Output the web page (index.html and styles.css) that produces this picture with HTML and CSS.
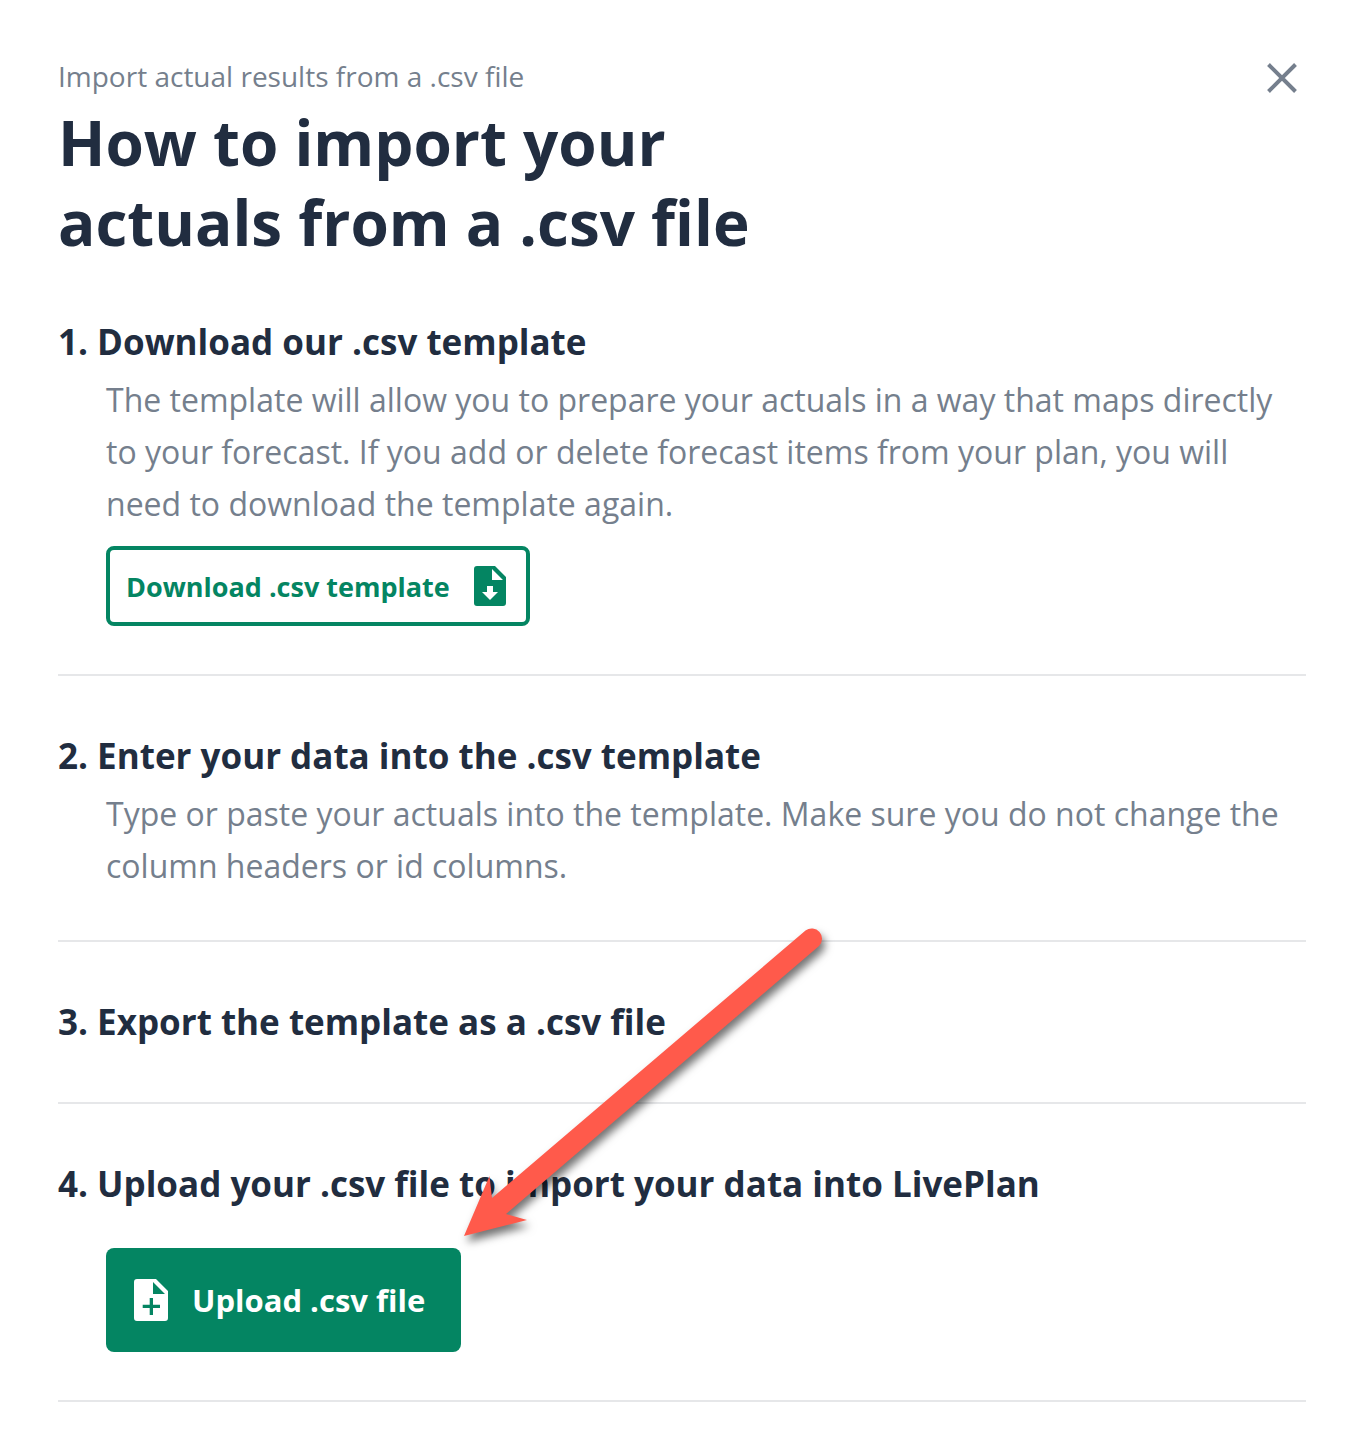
FILE: index.html
```
<!DOCTYPE html>
<html lang="en">

<head>
    <meta charset="UTF-8">
    <meta name="viewport" content="width=device-width, initial-scale=1.0">
    <title>Import actual results</title>
    <link rel="stylesheet" href="styles.css">
</head>

<body>
    <main class="modal">
        <header class="header">
            <div class="header-text">
                <p class="eyebrow">Import actual results from a .csv file</p>
                <h1 class="title">How to import your actuals from a .csv file</h1>
            </div>
            <button class="close" type="button" aria-label="Close">
                <svg width="30" height="30" viewBox="0 0 30 30">
                    <path d="M1.500 1.500L28.500 28.500M28.500 1.500L1.500 28.500" stroke="currentColor" stroke-width="4" />
                </svg>
            </button>
        </header>

        <section class="step">
            <h2>1. Download our .csv template</h2>
            <div class="step-body">
                <p>The template will allow you to prepare your actuals in a way that maps directly to your forecast. If you add or delete forecast items from your plan, you will need to download the template again.</p>
                <button class="btn btn-outline" type="button">
                    Download .csv template
                    <svg width="32" height="40" viewBox="0 0 32 40">
                        <path fill="currentColor" fill-rule="evenodd" d="M3 0H21L32 11V37Q32 40 29 40H3Q0 40 0 37V3Q0 0 3 0ZM18 3V14H29ZM13 20V26H8L16 34L24 26H19V20Z" />
                    </svg>
                </button>
            </div>
        </section>

        <section class="step">
            <h2>2. Enter your data into the .csv template</h2>
            <div class="step-body">
                <p>Type or paste your actuals into the template. Make sure you do not change the column headers or id columns.</p>
            </div>
        </section>

        <section class="step">
            <h2>3. Export the template as a .csv file</h2>
        </section>

        <section class="step">
            <h2>4. Upload your .csv file to import your data into LivePlan</h2>
            <div class="step-body">
                <button class="btn btn-solid" type="button">
                    <svg width="34" height="42" viewBox="0 0 34 42">
                        <path fill="currentColor" fill-rule="evenodd" d="M3 0H22L34 12V39Q34 42 31 42H3Q0 42 0 39V3Q0 0 3 0ZM19 3V15H31ZM15.700 19V25.700H8.700V29H15.700V36H19V29H26V25.700H19V19Z" />
                    </svg>
                    Upload .csv file
                </button>
            </div>
        </section>

        <!-- arrow pointing at the upload button -->
        <svg class="arrow" width="400" height="350" viewBox="0 0 400 350" aria-hidden="true">
            <path fill="#ff5a4b" d="M14 321L39.500 261L42 283L355.500 15.500A10.300 10.300 0 0 1 369 31L56 299L77 305Z" />
        </svg>
    </main>
</body>

</html>
```
FILE: styles.css
```
* {
    margin: 0;
    padding: 0;
    box-sizing: border-box;
}

body {
    background: #fff;
    color: #212d40;
    font-family: "Open Sans", sans-serif;
}

.modal {
    position: relative;
    padding: 50px 58px 46px;
}

.header {
    display: flex;
    justify-content: space-between;
    align-items: flex-start;
}

.eyebrow {
    color: #757f8d;
    font-size: 28px;
    line-height: 52px;
}

.title {
    max-width: 760px;
    font-size: 62px;
    font-weight: 700;
    line-height: 80px;
}

.close {
    display: flex;
    align-items: center;
    justify-content: center;
    width: 48px;
    height: 56px;
    border: none;
    background: none;
    color: #757f8d;
    cursor: pointer;
}

.step {
    padding: 48px 0;
    border-bottom: 2px solid #e6e7e9;
}

.step h2 {
    font-size: 35px;
    font-weight: 700;
    line-height: 64px;
}

.step-body {
    padding-left: 48px;
}

.step-body p {
    color: #757f8d;
    font-size: 32px;
    font-weight: 500;
    line-height: 52px;
}

.btn {
    display: flex;
    align-items: center;
    gap: 24px;
    font-family: inherit;
    font-weight: 700;
    border-radius: 8px;
    cursor: pointer;
}

.btn-outline {
    height: 80px;
    margin-top: 16px;
    padding: 0 20px 0 16px;
    border: 4px solid #048562;
    background: #fff;
    color: #048562;
    font-size: 27px;
}

.btn-solid {
    height: 104px;
    margin-top: 32px;
    padding: 0 36px 0 28px;
    border: none;
    background: #048562;
    color: #fff;
    font-size: 31px;
}

.arrow {
    position: absolute;
    top: 915px;
    left: 450px;
    overflow: visible;
    pointer-events: none;
    filter: drop-shadow(3px 6px 4px rgba(0, 0, 0, .55));
}
```
